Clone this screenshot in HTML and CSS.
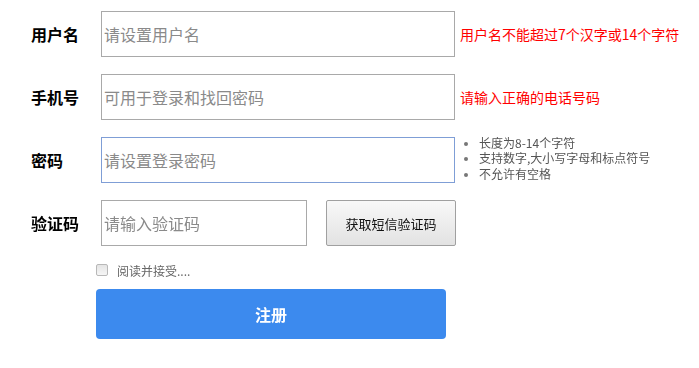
FILE: index.html
```html
<!DOCTYPE html>
<html lang="zh-CN">
<head>
<meta charset="utf-8">
<title>注册</title>
<link rel="stylesheet" href="styles.css">
</head>
<body>
<form class="reg">
  <div class="row">
    <label class="label">用户名</label>
    <input class="field" type="text" placeholder="请设置用户名">
    <span class="error">用户名不能超过7个汉字或14个字符</span>
  </div>
  <div class="row">
    <label class="label">手机号</label>
    <input class="field" type="text" placeholder="可用于登录和找回密码">
    <span class="error">请输入正确的电话号码</span>
  </div>
  <div class="row">
    <label class="label">密码</label>
    <input class="field" type="password" placeholder="请设置登录密码" autofocus>
    <ul class="tips">
      <li>长度为8-14个字符</li>
      <li>支持数字,大小写字母和标点符号</li>
      <li>不允许有空格</li>
    </ul>
  </div>
  <div class="row">
    <label class="label">验证码</label>
    <input class="field short" type="text" placeholder="请输入验证码">
    <button class="sms" type="button">获取短信验证码</button>
  </div>
  <div class="agree">
    <input class="check" type="checkbox">
    <span>阅读并接受....</span>
  </div>
  <button class="submit" type="button">注册</button>
</form>
</body>
</html>
```
FILE: styles.css
```css
* { box-sizing: border-box; }
body {
  margin: 0;
  background: #fff;
  font-family: "Noto Sans CJK SC", "Noto Sans", sans-serif;
  color: #000;
}
.reg {
  display: flex;
  flex-direction: column;
  padding: 11px 0 0 31px;
}
.row {
  display: flex;
  align-items: center;
  height: 46px;
  margin-bottom: 17px;
}
.label {
  width: 70px;
  font-size: 16px;
  font-weight: bold;
  line-height: 1;
}
.field {
  width: 354px;
  height: 46px;
  border: 1px solid #a9a9a9;
  padding: 0 2px;
  font-family: inherit;
  font-size: 16px;
  color: #333;
  outline: none;
  caret-color: #000;
}
.field::placeholder { color: #8a8a8a; }
.field:focus { border-color: #7f9ed6; }
.field.short { width: 206px; }
.error {
  margin-left: 5px;
  font-size: 14px;
  color: #f00;
  line-height: 1;
}
.tips {
  margin: 0 0 4px 0;
  padding: 0 0 0 24px;
  font-size: 12px;
  line-height: 15.5px;
  color: #555;
}
.tips li::marker { color: #777; font-size: 10px; }
.sms {
  margin-left: 19px;
  width: 130px;
  height: 46px;
  border: 1px solid #a0a0a0;
  border-radius: 2px;
  background: linear-gradient(#f8f8f8, #e2e2e2);
  font-family: inherit;
  font-size: 13px;
  color: #111;
  padding: 0;
}
.agree {
  display: flex;
  align-items: center;
  margin: 0 0 0 65px;
  height: 14px;
  font-size: 12px;
  color: #666;
}
.check {
  appearance: none;
  -webkit-appearance: none;
  width: 12px;
  height: 12px;
  margin: 0 9px 0 0;
  border: 1px solid #b8b8b8;
  border-radius: 2px;
  background: linear-gradient(#e4e4e4, #f6f6f6);
}
.submit {
  margin: 12px 0 0 65px;
  width: 350px;
  height: 50px;
  border: none;
  border-radius: 4px;
  background: #3c8aee;
  color: #fff;
  font-family: inherit;
  font-size: 16px;
  font-weight: bold;
  padding: 0;
}
```
